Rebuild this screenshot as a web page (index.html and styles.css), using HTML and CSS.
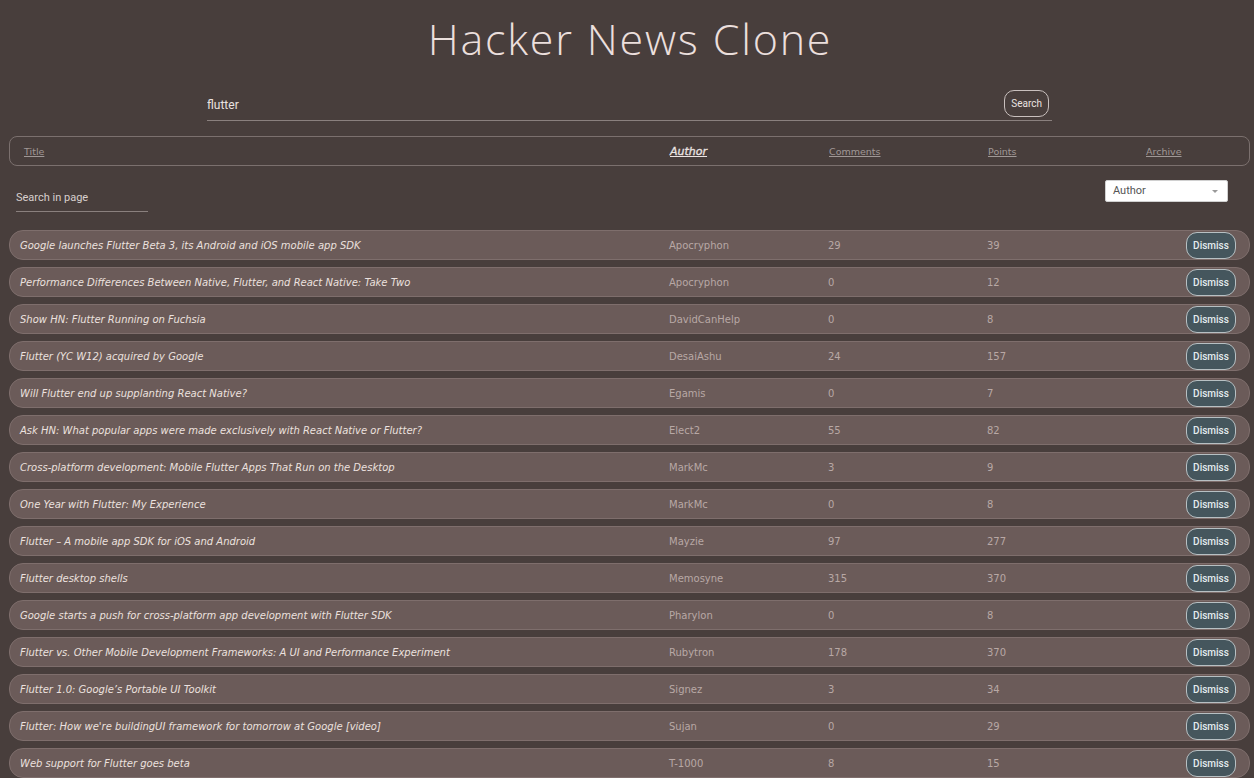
FILE: index.html
```html
<!DOCTYPE html>
<html lang="en">
<head>
<meta charset="utf-8">
<title>Hacker News Clone</title>
<link rel="stylesheet" href="styles.css">
</head>
<body>
<header class="top">
  <h1 class="brand">Hacker News Clone</h1>
  <form class="search">
    <input class="search-input" type="text" value="flutter">
    <button class="search-btn" type="button">Search</button>
  </form>
</header>

<nav class="sortbar">
  <a class="sort" href="#">Title</a>
  <a class="sort active" href="#">Author</a>
  <a class="sort" href="#">Comments</a>
  <a class="sort" href="#">Points</a>
  <a class="sort" href="#">Archive</a>
</nav>

<div class="tools">
  <input class="filter" type="text" placeholder="Search in page">
  <div class="select">Author<span class="caret"></span></div>
</div>

<main class="list">
  <div class="row"><span class="title">Google launches Flutter Beta 3, its Android and iOS mobile app SDK</span><span class="cell">Apocryphon</span><span class="cell">29</span><span class="cell">39</span><button class="dismiss" type="button">Dismiss</button></div>
  <div class="row"><span class="title">Performance Differences Between Native, Flutter, and React Native: Take Two</span><span class="cell">Apocryphon</span><span class="cell">0</span><span class="cell">12</span><button class="dismiss" type="button">Dismiss</button></div>
  <div class="row"><span class="title">Show HN: Flutter Running on Fuchsia</span><span class="cell">DavidCanHelp</span><span class="cell">0</span><span class="cell">8</span><button class="dismiss" type="button">Dismiss</button></div>
  <div class="row"><span class="title">Flutter (YC W12) acquired by Google</span><span class="cell">DesaiAshu</span><span class="cell">24</span><span class="cell">157</span><button class="dismiss" type="button">Dismiss</button></div>
  <div class="row"><span class="title">Will Flutter end up supplanting React Native?</span><span class="cell">Egamis</span><span class="cell">0</span><span class="cell">7</span><button class="dismiss" type="button">Dismiss</button></div>
  <div class="row"><span class="title">Ask HN: What popular apps were made exclusively with React Native or Flutter?</span><span class="cell">Elect2</span><span class="cell">55</span><span class="cell">82</span><button class="dismiss" type="button">Dismiss</button></div>
  <div class="row"><span class="title">Cross-platform development: Mobile Flutter Apps That Run on the Desktop</span><span class="cell">MarkMc</span><span class="cell">3</span><span class="cell">9</span><button class="dismiss" type="button">Dismiss</button></div>
  <div class="row"><span class="title">One Year with Flutter: My Experience</span><span class="cell">MarkMc</span><span class="cell">0</span><span class="cell">8</span><button class="dismiss" type="button">Dismiss</button></div>
  <div class="row"><span class="title">Flutter – A mobile app SDK for iOS and Android</span><span class="cell">Mayzie</span><span class="cell">97</span><span class="cell">277</span><button class="dismiss" type="button">Dismiss</button></div>
  <div class="row"><span class="title">Flutter desktop shells</span><span class="cell">Memosyne</span><span class="cell">315</span><span class="cell">370</span><button class="dismiss" type="button">Dismiss</button></div>
  <div class="row"><span class="title">Google starts a push for cross-platform app development with Flutter SDK</span><span class="cell">Pharylon</span><span class="cell">0</span><span class="cell">8</span><button class="dismiss" type="button">Dismiss</button></div>
  <div class="row"><span class="title">Flutter vs. Other Mobile Development Frameworks: A UI and Performance Experiment</span><span class="cell">Rubytron</span><span class="cell">178</span><span class="cell">370</span><button class="dismiss" type="button">Dismiss</button></div>
  <div class="row"><span class="title">Flutter 1.0: Google’s Portable UI Toolkit</span><span class="cell">Signez</span><span class="cell">3</span><span class="cell">34</span><button class="dismiss" type="button">Dismiss</button></div>
  <div class="row"><span class="title">Flutter: How we're buildingUI framework for tomorrow at Google [video]</span><span class="cell">Sujan</span><span class="cell">0</span><span class="cell">29</span><button class="dismiss" type="button">Dismiss</button></div>
  <div class="row"><span class="title">Web support for Flutter goes beta</span><span class="cell">T-1000</span><span class="cell">8</span><span class="cell">15</span><button class="dismiss" type="button">Dismiss</button></div>
</main>
</body>
</html>
```

FILE: styles.css
```css
* { box-sizing: border-box; }

html, body {
  margin: 0;
  padding: 0;
  background: #483e3c;
  height: 100%;
  overflow: hidden;
}

body {
  font-family: "DejaVu Sans", "Open Sans", sans-serif;
  color: #ece2e0;
}

.top {
  display: flex;
  flex-direction: column;
  align-items: center;
  padding-top: 12px;
}

.brand {
  margin: 0;
  font-family: "Open Sans", sans-serif;
  font-weight: 300;
  font-size: 43px;
  line-height: 54px;
  letter-spacing: 1.8px;
  color: #ebdfdc;
  padding-left: 6px;
}

.search {
  display: flex;
  align-items: center;
  width: 845px;
  margin-top: 25px;
  margin-left: 5px;
  border-bottom: 1px solid #8a807e;
  padding-bottom: 3px;
}

.search-input {
  flex: 1;
  background: transparent;
  border: none;
  outline: none;
  font-family: Roboto, sans-serif;
  font-size: 12px;
  color: #e9e2e0;
  padding: 0;
  height: 20px;
  margin-top: 2px;
}

.search-btn {
  font-family: Roboto, sans-serif;
  font-size: 10px;
  color: #e9e2e0;
  background: transparent;
  border: 1px solid #c9c0be;
  border-radius: 10px;
  height: 27px;
  padding: 0 6px;
  margin-right: 3px;
  margin-top: -1px;
}

.sortbar {
  display: grid;
  grid-template-columns: 646px 159px 159px 158px 1fr;
  align-items: center;
  height: 30px;
  margin: 15px 4px 0 9px;
  padding: 0 14px;
  border: 1px solid #7b706e;
  border-radius: 8px;
}

.sort {
  font-size: 9.5px;
  color: #a09896;
  text-decoration: underline;
}

.sort.active {
  font-style: italic;
  font-size: 11px;
  color: #ece4e2;
  -webkit-text-stroke: 0.3px #ece4e2;
}

.tools {
  display: flex;
  justify-content: space-between;
  align-items: flex-start;
  margin: 14px 26px 0 16px;
}

.filter {
  width: 132px;
  margin-top: 11px;
  background: transparent;
  border: none;
  border-bottom: 1px solid #8a807e;
  outline: none;
  font-family: Roboto, sans-serif;
  font-size: 11px;
  color: #e9e2e0;
  padding: 0 0 7px 0;
}

.filter::placeholder { color: #d8d0ce; }

.select {
  position: relative;
  width: 123px;
  height: 22px;
  background: #ffffff;
  border: 1px solid #d0d0d0;
  border-radius: 2px;
  font-family: Roboto, sans-serif;
  font-size: 11px;
  color: #555555;
  line-height: 20px;
  padding-left: 7px;
}

.caret {
  position: absolute;
  right: 9px;
  top: 9px;
  width: 0;
  height: 0;
  border-left: 3px solid transparent;
  border-right: 3px solid transparent;
  border-top: 3px solid #999999;
}

.list {
  display: flex;
  flex-direction: column;
  gap: 7px;
  margin: 18px 4px 0 9px;
}

.row {
  display: grid;
  grid-template-columns: 649px 159px 159px 158px 1fr;
  align-items: center;
  height: 30px;
  padding: 0 13px 0 10px;
  background: #6b5b59;
  border: 1px solid #7e6e6c;
  border-radius: 14px;
  font-size: 10px;
}

.title {
  font-style: italic;
  color: #ebe1df;
  white-space: nowrap;
}

.cell {
  color: #b8a8a5;
}

.dismiss {
  justify-self: end;
  width: 50px;
  height: 27px;
  background: #45565d;
  border: 1px solid #b7c0c3;
  border-radius: 11px;
  font-family: Roboto, sans-serif;
  font-weight: 500;
  font-size: 10px;
  color: #e4ecef;
  padding: 0;
}
```
